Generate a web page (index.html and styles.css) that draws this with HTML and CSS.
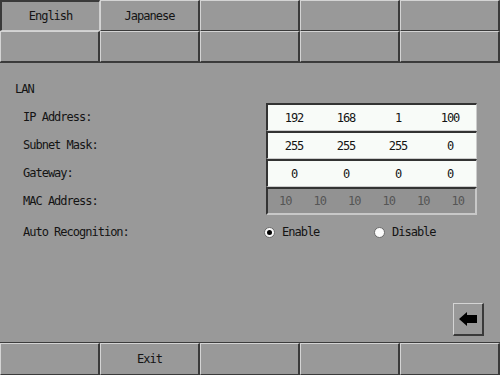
FILE: index.html
```html
<!DOCTYPE html>
<html lang="en">
<head>
    <meta charset="UTF-8">
    <title>LAN Settings</title>
    <link rel="stylesheet" href="styles.css">
</head>
<body>

<div class="screen">
    <div class="tab-grid">
        <div class="btn pressed">English</div>
        <div class="btn">Japanese</div>
        <div class="btn"></div>
        <div class="btn"></div>
        <div class="btn"></div>
        <div class="btn"></div>
        <div class="btn"></div>
        <div class="btn"></div>
        <div class="btn"></div>
        <div class="btn"></div>
    </div>

    <div class="content">
        <div class="section-title">LAN</div>

        <div class="form-row">
            <div class="label">IP Address:</div>
            <div class="field">
                <span>192</span><span>168</span><span>1</span><span>100</span>
            </div>
        </div>
        <div class="form-row">
            <div class="label">Subnet Mask:</div>
            <div class="field">
                <span>255</span><span>255</span><span>255</span><span>0</span>
            </div>
        </div>
        <div class="form-row">
            <div class="label">Gateway:</div>
            <div class="field">
                <span>0</span><span>0</span><span>0</span><span>0</span>
            </div>
        </div>
        <div class="form-row">
            <div class="label">MAC Address:</div>
            <div class="field mac">
                <span>10</span><span>10</span><span>10</span><span>10</span><span>10</span><span>10</span>
            </div>
        </div>
        <div class="form-row radio-row">
            <div class="label">Auto Recognition:</div>
            <div class="radios">
                <label class="radio checked"><span class="dot"></span>Enable</label>
                <label class="radio"><span class="dot"></span>Disable</label>
            </div>
        </div>

        <div class="back-btn">
            <svg width="18" height="14" viewBox="0 0 18 14">
                <path d="M0 7 L8 0 L8 3 L18 3 L18 11 L8 11 L8 14 Z" fill="#000"/>
            </svg>
        </div>
    </div>

    <div class="tab-grid bottom">
        <div class="btn"></div>
        <div class="btn">Exit</div>
        <div class="btn"></div>
        <div class="btn"></div>
        <div class="btn"></div>
    </div>
</div>

</body>
</html>
```

FILE: styles.css
```css
body {
    margin: 0;
    padding: 0;
    background-color: #999999;
    font-family: "DejaVu Sans Mono", "Liberation Mono", monospace;
    font-size: 12px;
    letter-spacing: -1px;
    color: #141414;
}

.screen {
    width: 500px;
    height: 375px;
    display: flex;
    flex-direction: column;
    overflow: hidden;
}

.tab-grid {
    display: grid;
    grid-template-columns: repeat(5, 100px);
    grid-auto-rows: 31px;
    border-bottom: 1px solid #3c3c3c;
}

.tab-grid.bottom {
    border-bottom: none;
    border-top: 1px solid #3c3c3c;
    grid-auto-rows: 32px;
}

.btn {
    box-sizing: border-box;
    display: flex;
    justify-content: center;
    align-items: center;
    background-color: #999999;
    border-top: 1px solid #d4d4d4;
    border-left: 1px solid #d4d4d4;
    border-bottom: 1px solid #3a3a3a;
    border-right: 2px solid #3a3a3a;
}

.btn.pressed {
    border-top: 2px solid #3a3a3a;
    border-left: 2px solid #3a3a3a;
    border-bottom: 1px solid #cfcfcf;
    border-right: 1px solid #cfcfcf;
}

.content {
    flex: 1;
    display: flex;
    flex-direction: column;
    padding: 19px 16px 6px 15px;
}

.section-title {
    height: 14px;
    line-height: 14px;
    margin-bottom: 7px;
}

.form-row {
    display: flex;
    align-items: center;
    height: 28px;
}

.label {
    width: 243px;
    padding-left: 8px;
}

.field {
    box-sizing: border-box;
    width: 211px;
    height: 28px;
    display: grid;
    grid-template-columns: repeat(4, 1fr);
    align-items: center;
    background-color: #f8fbf8;
    border-top: 2px solid #333333;
    border-left: 2px solid #333333;
    border-bottom: 1px solid #cccccc;
    border-right: 1px solid #cccccc;
}

.field span {
    text-align: center;
}

.field.mac {
    grid-template-columns: repeat(6, 1fr);
    background-color: #929292;
    color: #555555;
    border-bottom: 2px solid #c8c8c8;
    border-right: 2px solid #c8c8c8;
}

.radio-row {
    margin-top: 3px;
}

.radios {
    display: flex;
}

.radio {
    display: flex;
    align-items: center;
    width: 110px;
}

.dot {
    box-sizing: border-box;
    width: 11px;
    height: 11px;
    margin-right: 7px;
    border-radius: 50%;
    background-color: #fbfbfb;
    border: 1px solid #6a6a6a;
    display: flex;
    justify-content: center;
    align-items: center;
}

.radio.checked .dot::after {
    content: "";
    width: 5px;
    height: 5px;
    border-radius: 50%;
    background-color: #000;
}

.back-btn {
    box-sizing: border-box;
    margin-top: auto;
    align-self: flex-end;
    width: 31px;
    height: 33px;
    display: flex;
    justify-content: center;
    align-items: center;
    border-top: 1px solid #d4d4d4;
    border-left: 1px solid #d4d4d4;
    border-bottom: 2px solid #3a3a3a;
    border-right: 2px solid #3a3a3a;
}
```
